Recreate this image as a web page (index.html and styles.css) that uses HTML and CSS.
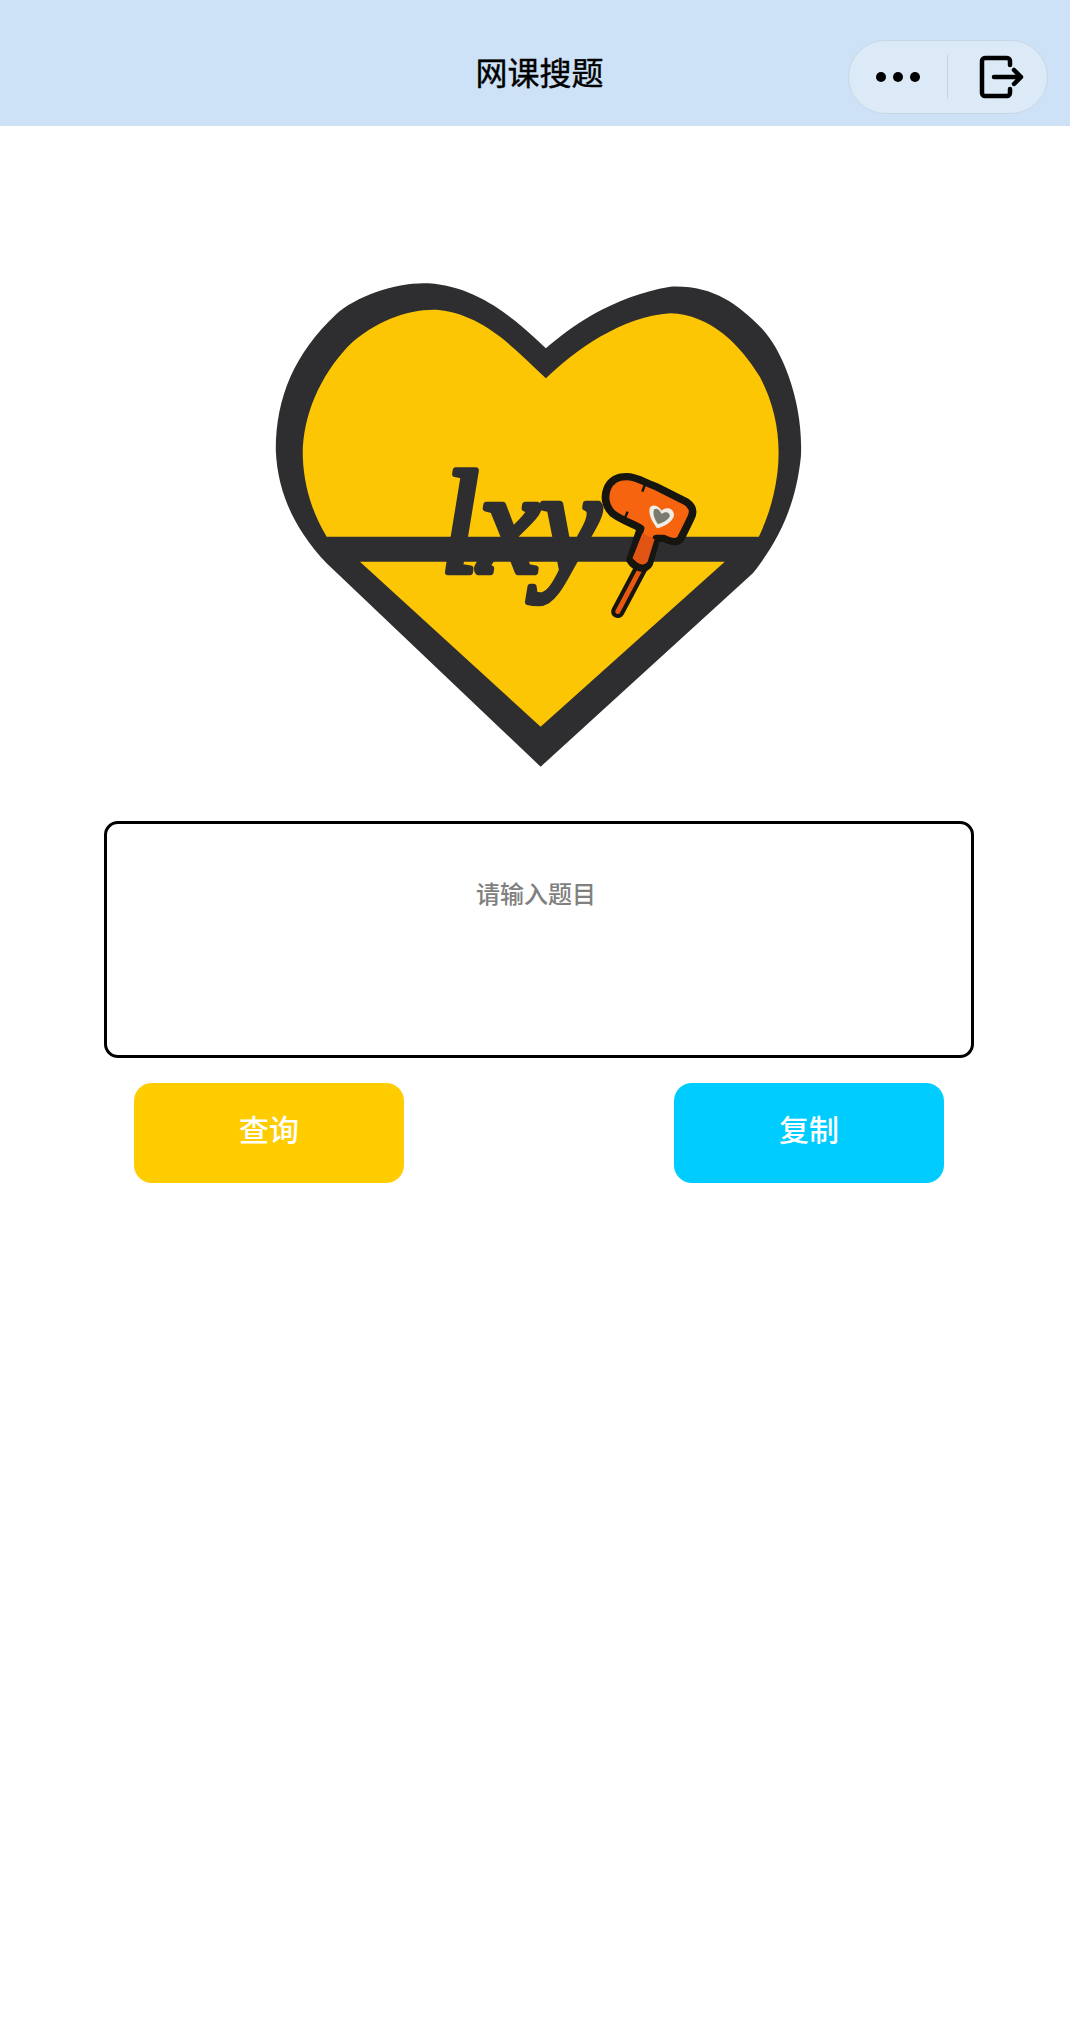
FILE: index.html
```html
<!DOCTYPE html>
<html lang="zh-CN">
<head>
<meta charset="utf-8">
<title>网课搜题</title>
<link rel="stylesheet" href="styles.css">
</head>
<body>
<header class="navbar">
  <h1 class="nav-title">网课搜题</h1>
  <div class="capsule">
    <div class="capsule-cell capsule-more">
      <svg class="icon-more" width="46" height="12" viewBox="0 0 46 12" aria-hidden="true">
        <circle cx="6" cy="6" r="5"/><circle cx="23" cy="6" r="5"/><circle cx="40" cy="6" r="5"/>
      </svg>
    </div>
    <span class="capsule-divider"></span>
    <div class="capsule-cell capsule-exit">
      <svg class="icon-exit" width="46" height="44" viewBox="0 0 46 44" aria-hidden="true">
        <path d="M32 10V6A3 3 0 0 0 29 3H7A3 3 0 0 0 4 6V38A3 3 0 0 0 7 41H29A3 3 0 0 0 32 38V34"/>
        <path d="M16 22H43M36 15L43 22L36 29"/>
      </svg>
    </div>
  </div>
</header>

<main class="page">
  <div class="logo-wrap">
    <svg class="logo" viewBox="0 0 1568 1530" preserveAspectRatio="none" role="img" aria-label="lxy">
      <path class="heart-dark" d="M815 235C880 175 1000 80 1170 50C1290 45 1360 100 1430 175C1490 240 1550 400 1542 560C1530 680 1495 790 1405 910L800 1490L190 880C100 780 50 670 45 540C45 380 100 250 215 135C275 75 400 35 480 40C620 50 720 140 815 235Z"/>
      <path class="heart-fill" d="M815 325C900 240 1030 140 1170 130C1285 135 1365 220 1425 320C1475 420 1485 520 1475 610C1465 690 1445 750 1422 800H190C150 730 125 650 122 560C120 440 170 320 250 230C330 150 430 115 510 120C640 135 730 240 815 325Z"/>
      <path class="heart-fill" d="M285 875H1325L800 1370Z"/>
      <text class="logo-text" x="515" y="905" textLength="455" lengthAdjust="spacingAndGlyphs">lxy</text>
      <path class="hammer-stick-back" d="M1088 890L1020 1025"/>
      <path class="hammer-stick" d="M1088 890L1020 1025"/>
      <path class="hammer-head" d="M1045 620C1075 620 1100 640 1130 650L1215 695C1235 710 1238 725 1228 745L1200 805C1190 822 1170 815 1150 805L1130 805L1110 880C1100 905 1070 895 1055 870L1085 775C1060 760 1030 750 1005 730C985 710 980 680 990 655C1000 630 1020 620 1045 620Z"/>
      <path class="hammer-shade" d="M1090 790L1125 808L1105 875C1095 890 1075 880 1062 865Z"/>
      <path class="hammer-notch" d="M1097 645L1090 665M1040 745L1048 725"/>
      <path class="badge-heart" d="M1145 722C1160 708 1182 716 1180 738C1176 755 1150 772 1132 775C1118 755 1105 730 1112 712C1122 700 1138 708 1145 722Z"/>
      <path class="badge-heart-in" d="M1145 732C1156 722 1170 728 1168 740C1160 752 1145 760 1134 762C1125 748 1118 730 1124 718C1132 712 1140 720 1145 732Z"/>
    </svg>
  </div>

  <div class="question-box">
    <span class="placeholder">请输入题目</span>
  </div>

  <div class="actions">
    <button class="btn btn-query" type="button">查询</button>
    <button class="btn btn-copy" type="button">复制</button>
  </div>
</main>
</body>
</html>
```

FILE: styles.css
```css
* {
  box-sizing: border-box;
}

html,
body {
  margin: 0;
  height: 2022px;
  background: #ffffff;
  font-family: "Noto Sans CJK SC", "Noto Sans", sans-serif;
  overflow: hidden;
}

.navbar {
  position: relative;
  height: 126px;
  background: #cde2f6;
  display: flex;
  justify-content: center;
  padding: 48px 0 0 9px;
}

.nav-title {
  margin: 0;
  font-size: 32px;
  line-height: 46px;
  font-weight: 400;
  -webkit-text-stroke: 0.4px #000000;
  color: #000000;
}

.capsule {
  position: absolute;
  left: 848px;
  top: 40px;
  width: 200px;
  height: 74px;
  display: flex;
  align-items: center;
  background: #dceaf8;
  border: 1.5px solid #c8d7e7;
  border-radius: 37px;
}

.capsule-cell {
  display: flex;
  align-items: center;
  justify-content: center;
  height: 100%;
}

.capsule-more {
  width: 98px;
}

.capsule-exit {
  flex: 1;
  padding-left: 7px;
}

.capsule-divider {
  width: 1px;
  height: 44px;
  background: #c6d4e3;
}

.icon-more circle {
  fill: #000000;
}

.icon-exit path {
  fill: none;
  stroke: #000000;
  stroke-width: 4.5;
  stroke-linecap: round;
  stroke-linejoin: round;
}

.page {
  padding: 155px 96px 0 104px;
}

.logo-wrap {
  display: flex;
  justify-content: flex-start;
  padding-left: 156px;
  height: 540px;
}

.logo {
  display: block;
  width: 550px;
  height: 510px;
  margin-top: -11px;
  filter: blur(0.7px);
}

.heart-dark {
  fill: #2e2e30;
}

.heart-fill {
  fill: #fdc605;
}

.logo-text {
  font-family: "Liberation Serif", serif;
  font-style: italic;
  font-weight: 400;
  font-size: 440px;
  fill: #2e2e30;
  stroke: #2e2e30;
  stroke-width: 20;
  stroke-linejoin: round;
}

.hammer-stick-back {
  fill: none;
  stroke: #171510;
  stroke-width: 38;
  stroke-linecap: round;
}

.hammer-stick {
  fill: none;
  stroke: #e8590f;
  stroke-width: 14;
  stroke-linecap: round;
}

.hammer-head {
  fill: #f7640f;
  stroke: #171510;
  stroke-width: 22;
  stroke-linejoin: round;
}

.hammer-shade {
  fill: #e15413;
}

.hammer-notch {
  fill: none;
  stroke: #171510;
  stroke-width: 7;
}

.badge-heart {
  fill: #efeee6;
}

.badge-heart-in {
  fill: #7a7a6e;
}

.question-box {
  width: 870px;
  height: 237px;
  padding: 52px 6px 0 0;
  border: 3px solid #000000;
  border-radius: 14px;
  text-align: center;
  background: #ffffff;
}

.placeholder {
  display: block;
  font-size: 24px;
  line-height: 34px;
  font-weight: 500;
  color: #808080;
}

.actions {
  display: flex;
  justify-content: space-between;
  padding: 25px 30px 0;
}

.btn {
  width: 270px;
  height: 100px;
  padding: 0 0 10px;
  border: 0;
  border-radius: 18px;
  font-family: inherit;
  font-size: 30px;
  font-weight: 500;
  color: #ffffff;
}

.btn-query {
  background: #ffcc00;
}

.btn-copy {
  background: #00ccff;
}
```
